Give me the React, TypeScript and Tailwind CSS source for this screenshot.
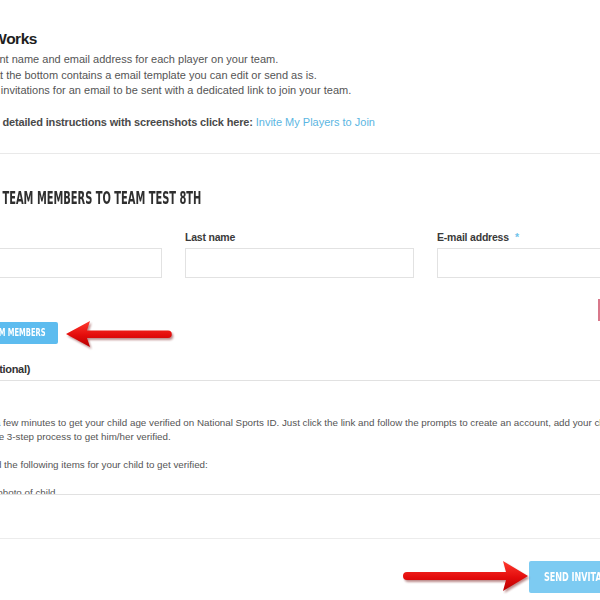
import React from "react";

function Arrows() {
  const left =
    "M66 334 L90 321 L87 330.5 L168 330.5 A3.75 3.75 0 0 1 168 338 L87 338 L90 347 Z";
  const right =
    "M528 576 L503 561 L506 572 L407 572 A4 4 0 0 0 407 580 L506 580 L503 591 Z";
  return (
    <svg
      className="absolute inset-0 pointer-events-none"
      width="600"
      height="600"
      viewBox="0 0 600 600"
    >
      <defs>
        <linearGradient id="rg" x1="0" y1="0" x2="0" y2="1">
          <stop offset="0" stopColor="#ff3a2e" />
          <stop offset="0.55" stopColor="#e30c0c" />
          <stop offset="1" stopColor="#b80000" />
        </linearGradient>
        <filter id="sh" x="-20%" y="-50%" width="140%" height="200%">
          <feGaussianBlur stdDeviation="1.2" />
        </filter>
      </defs>
      <path d={left} transform="translate(1.5 2)" fill="#6b0000" opacity="0.45" filter="url(#sh)" />
      <path d={left} fill="url(#rg)" />
      <path d={right} transform="translate(1.5 2)" fill="#6b0000" opacity="0.45" filter="url(#sh)" />
      <path d={right} fill="url(#rg)" />
    </svg>
  );
}

export default function App() {
  return (
    <div className="relative w-[600px] h-[600px] overflow-hidden bg-white font-['Liberation_Sans',Arial,sans-serif] whitespace-nowrap">
      <div className="pt-[29px]">
        {/* How it works */}
        <div className="-ml-[55px] text-[15.5px] leading-[20px] font-bold tracking-[-0.5px] text-[#1e1e1e]">
          How It Works
        </div>
        <div className="mt-[3px] text-[11px] leading-[15.5px] text-[#555]">
          <div className="-ml-[69px]">1. Enter student name and email address for each player on your team.</div>
          <div className="-ml-[66px]">2. Message at the bottom contains a email template you can edit or send as is.</div>
          <div className="-ml-[67px]">3. Click Send invitations for an email to be sent with a dedicated link to join your team.</div>
        </div>
        <div className="mt-[16.5px] -ml-[47px] text-[11px] leading-[15.5px]">
          <span className="font-bold tracking-[-0.15px] text-[#4a4a4a]">For more detailed instructions with screenshots click here: </span>
          <span className="text-[#5bb6e2]">Invite My Players to Join</span>
        </div>
        <div className="mt-[22px] border-t border-[#e9e9e9]" />

        {/* Section heading */}
        <div className="mt-[33px] -ml-[25px] h-[22px] leading-[22px]">
          <span className="inline-block origin-left scale-x-[0.61] font-['DejaVu_Sans_Condensed',sans-serif] font-bold text-[18px] text-[#2f2f2f]">
            ADD TEAM MEMBERS TO TEAM TEST 8TH
          </span>
        </div>

        {/* Form grid */}
        <div className="mt-[21px] -ml-[67px] grid grid-cols-[229px_229px_229px] gap-x-[23px]">
          {[
            { label: "First name", req: true },
            { label: "Last name", req: false },
            { label: "E-mail address", req: true },
          ].map((f) => (
            <div key={f.label} className="flex flex-col">
              <div className="h-[14px] leading-[14px] text-[10.5px] font-bold tracking-[-0.2px] text-[#3a3a3a]">
                {f.label}
                {f.req && <span className="ml-[6px] text-[#6fc3ea]">*</span>}
              </div>
              <div className="mt-[4px] h-[30px] border border-[#e2e2e2] bg-white" />
            </div>
          ))}
        </div>

        {/* remove row */}
        <div className="mt-[21px] h-[22px] ml-[598px] w-[60px] border-l-2 border-[#d9788b]" />

        {/* Add button */}
        <div className="mt-[1px] -ml-[80px] w-[138px] h-[22px] rounded-[2px] bg-[#5dbcef] flex items-center justify-end pr-[12px]">
          <span className="inline-block origin-right scale-x-[0.68] font-['DejaVu_Sans_Condensed',sans-serif] font-bold text-[11px] leading-[12px] text-white">
            ADD TEAM MEMBERS
          </span>
        </div>

        {/* Message label */}
        <div className="mt-[18px] h-[14px] leading-[14px] -ml-[66px] text-[11px] font-bold tracking-[-0.3px] text-[#333]">
          Message (Optional)
        </div>

        {/* Textarea */}
        <div className="mt-[4px] -ml-[67px] w-[733px] h-[115px] overflow-hidden border border-[#e1e1e1] pl-[7px] pt-[35px] text-[9.8px] leading-[14px] text-[#555]">
          <div>Please take a few minutes to get your child age verified on National Sports ID. Just click the link and follow the prompts to create an account, add your child and</div>
          <div className="ml-[7px]">complete the 3-step process to get him/her verified.</div>
          <div className="h-[14px]" />
          <div className="ml-[3px]">You will need the following items for your child to get verified:</div>
          <div className="h-[14px]" />
          <div className="ml-[4px]">1. A current photo of child</div>
        </div>

        {/* separator */}
        <div className="mt-[43px] border-t border-[#ececec]" />

        {/* Send button */}
        <div className="mt-[22px] ml-[529px] w-[140px] h-[32px] rounded-[2px] bg-[#7dcbf2] flex items-center pl-[15px]">
          <span className="inline-block origin-left scale-x-[0.69] font-['DejaVu_Sans_Condensed',sans-serif] font-bold text-[13px] leading-[14px] text-white">
            SEND INVITATIONS
          </span>
        </div>
      </div>
      <Arrows />
    </div>
  );
}
